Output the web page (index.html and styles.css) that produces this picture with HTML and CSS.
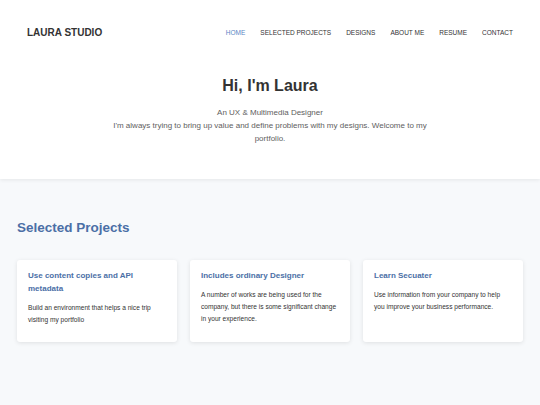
FILE: index.html
```html
<!DOCTYPE html>
<html>
<head>
<meta charset="utf-8">
<link rel="stylesheet" href="styles.css">
</head>
<body>
<header class="top">
  <nav class="bar">
    <div class="logo">LAURA STUDIO</div>
    <ul class="menu">
      <li class="active">HOME</li>
      <li>SELECTED PROJECTS</li>
      <li>DESIGNS</li>
      <li>ABOUT ME</li>
      <li>RESUME</li>
      <li>CONTACT</li>
    </ul>
  </nav>
  <section class="hero">
    <h1>Hi, I'm Laura</h1>
    <p>An UX &amp; Multimedia Designer<br>I'm always trying to bring up value and define problems with my designs. Welcome to my portfolio.</p>
  </section>
</header>
<main class="projects">
  <h2>Selected Projects</h2>
  <div class="cards">
    <div class="card">
      <h3>Use content copies and API metadata</h3>
      <p>Build an environment that helps a nice trip visiting my portfolio</p>
    </div>
    <div class="card">
      <h3>Includes ordinary Designer</h3>
      <p>A number of works are being used for the company, but there is some significant change in your experience.</p>
    </div>
    <div class="card">
      <h3>Learn Secuater</h3>
      <p>Use information from your company to help<br>you improve your business performance.</p>
    </div>
  </div>
</main>
</body>
</html>
```
FILE: styles.css
```css
* { box-sizing: border-box; }
html, body { margin: 0; padding: 0; }
body {
  font-family: "Liberation Sans", Arial, sans-serif;
  background: #f7f9fb;
  color: #333;
  height: 405px;
  overflow: hidden;
}
.top {
  background: #fff;
  box-shadow: 0 1px 4px rgba(0,0,0,0.08);
  padding-bottom: 34px;
  position: relative;
}
.bar {
  display: flex;
  justify-content: space-between;
  align-items: center;
  height: 64px;
  padding: 0 27px;
}
.logo {
  font-size: 10px;
  font-weight: bold;
  color: #333;
}
.menu {
  list-style: none;
  margin: 0;
  padding: 0;
  display: flex;
  gap: 15px;
  font-size: 6.5px;
  color: #333;
}
.menu .active { color: #5b84c4; }
.hero {
  text-align: center;
  padding-top: 12px;
}
.hero h1 {
  margin: 0;
  font-size: 16px;
  line-height: 19px;
  color: #333;
}
.hero p {
  margin: 11px auto 0;
  max-width: 336px;
  font-size: 8px;
  line-height: 13px;
  color: #5e5e5e;
}
.projects {
  padding: 41px 17px 0;
}
.projects h2 {
  margin: 0 0 24px;
  font-size: 13.5px;
  line-height: 16px;
  color: #4b6fa6;
}
.cards {
  display: grid;
  grid-template-columns: repeat(3, 1fr);
  gap: 13px;
}
.card {
  background: #fff;
  border-radius: 3px;
  box-shadow: 0 1px 4px rgba(0,0,0,0.1);
  padding: 9px 11px 16px;
}
.card h3 {
  margin: 0;
  font-size: 8px;
  line-height: 13px;
  color: #4b6fa6;
}
.card p {
  margin: 7px 0 0;
  font-size: 6.6px;
  line-height: 12px;
  color: #333;
}
```
